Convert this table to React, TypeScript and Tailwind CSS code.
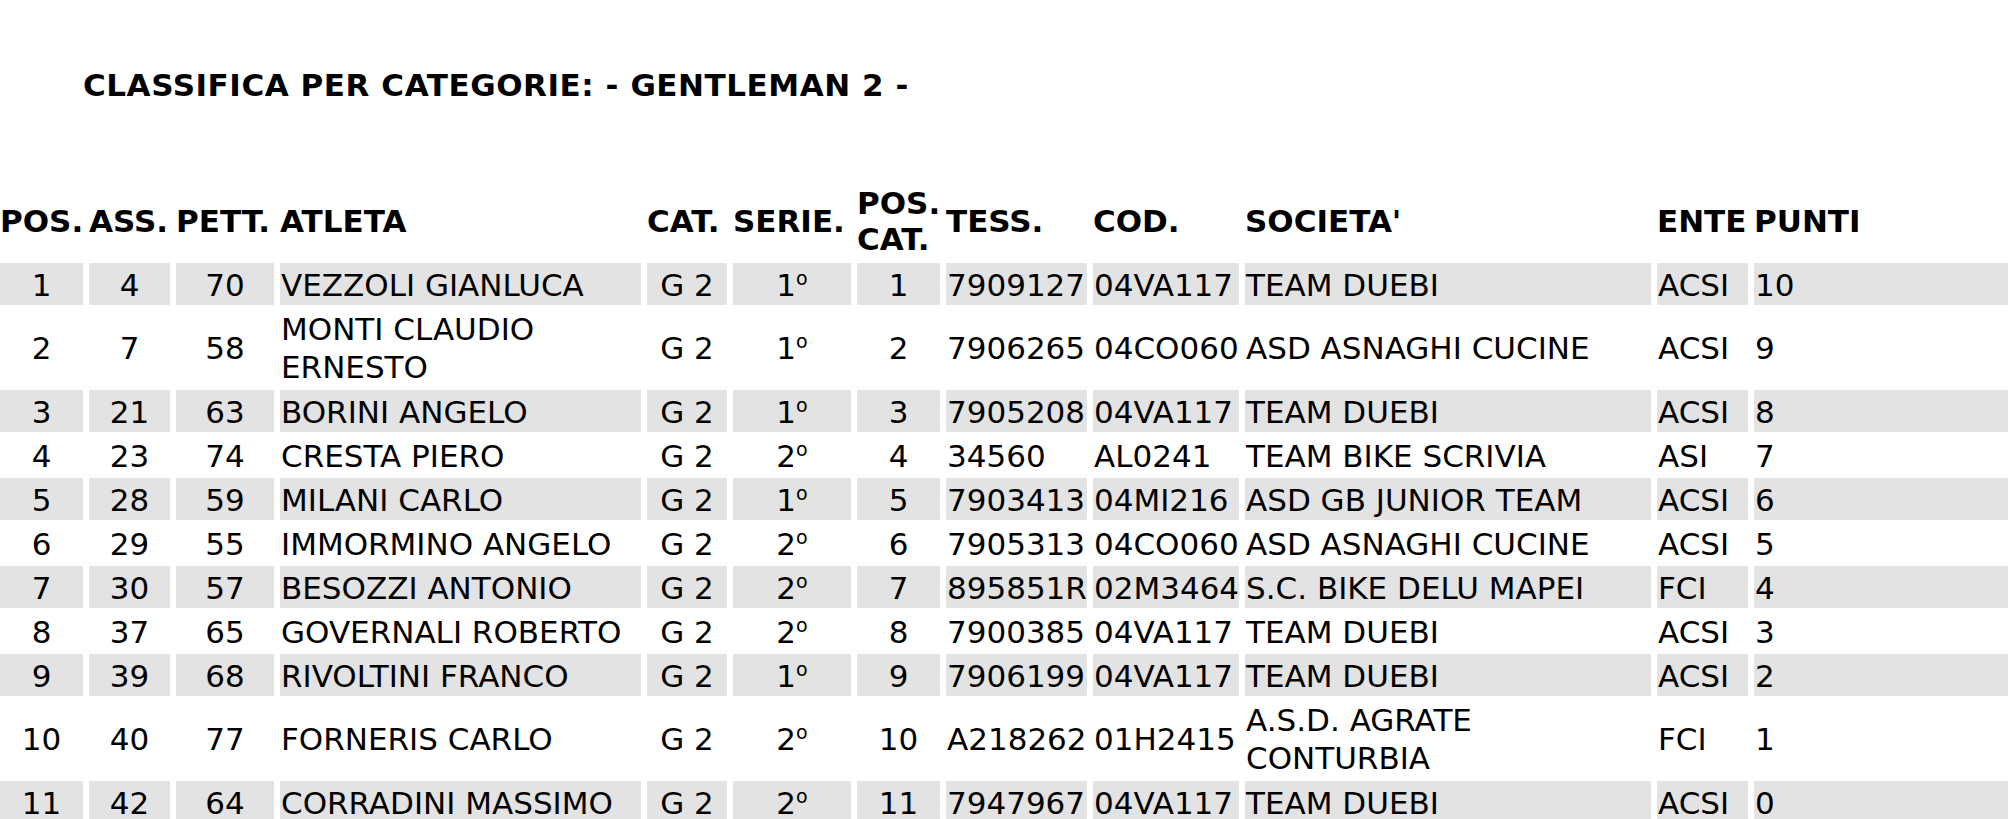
import React from "react";

type Row = {
  pos: string;
  ass: string;
  pett: string;
  atleta: string;
  cat: string;
  serie: string;
  posCat: string;
  tess: string;
  cod: string;
  societa: string;
  ente: string;
  punti: string;
  tall?: boolean;
};

const rows: Row[] = [
  { pos: "1", ass: "4", pett: "70", atleta: "VEZZOLI GIANLUCA", cat: "G 2", serie: "1º", posCat: "1", tess: "7909127", cod: "04VA117", societa: "TEAM DUEBI", ente: "ACSI", punti: "10" },
  { pos: "2", ass: "7", pett: "58", atleta: "MONTI CLAUDIO ERNESTO", cat: "G 2", serie: "1º", posCat: "2", tess: "7906265", cod: "04CO060", societa: "ASD ASNAGHI CUCINE", ente: "ACSI", punti: "9", tall: true },
  { pos: "3", ass: "21", pett: "63", atleta: "BORINI ANGELO", cat: "G 2", serie: "1º", posCat: "3", tess: "7905208", cod: "04VA117", societa: "TEAM DUEBI", ente: "ACSI", punti: "8" },
  { pos: "4", ass: "23", pett: "74", atleta: "CRESTA PIERO", cat: "G 2", serie: "2º", posCat: "4", tess: "34560", cod: "AL0241", societa: "TEAM BIKE SCRIVIA", ente: "ASI", punti: "7" },
  { pos: "5", ass: "28", pett: "59", atleta: "MILANI CARLO", cat: "G 2", serie: "1º", posCat: "5", tess: "7903413", cod: "04MI216", societa: "ASD GB JUNIOR TEAM", ente: "ACSI", punti: "6" },
  { pos: "6", ass: "29", pett: "55", atleta: "IMMORMINO ANGELO", cat: "G 2", serie: "2º", posCat: "6", tess: "7905313", cod: "04CO060", societa: "ASD ASNAGHI CUCINE", ente: "ACSI", punti: "5" },
  { pos: "7", ass: "30", pett: "57", atleta: "BESOZZI ANTONIO", cat: "G 2", serie: "2º", posCat: "7", tess: "895851R", cod: "02M3464", societa: "S.C. BIKE DELU MAPEI", ente: "FCI", punti: "4" },
  { pos: "8", ass: "37", pett: "65", atleta: "GOVERNALI ROBERTO", cat: "G 2", serie: "2º", posCat: "8", tess: "7900385", cod: "04VA117", societa: "TEAM DUEBI", ente: "ACSI", punti: "3" },
  { pos: "9", ass: "39", pett: "68", atleta: "RIVOLTINI FRANCO", cat: "G 2", serie: "1º", posCat: "9", tess: "7906199", cod: "04VA117", societa: "TEAM DUEBI", ente: "ACSI", punti: "2" },
  { pos: "10", ass: "40", pett: "77", atleta: "FORNERIS CARLO", cat: "G 2", serie: "2º", posCat: "10", tess: "A218262", cod: "01H2415", societa: "A.S.D. AGRATE CONTURBIA", ente: "FCI", punti: "1", tall: true },
  { pos: "11", ass: "42", pett: "64", atleta: "CORRADINI MASSIMO", cat: "G 2", serie: "2º", posCat: "11", tess: "7947967", cod: "04VA117", societa: "TEAM DUEBI", ente: "ACSI", punti: "0" },
];

const gridCols =
  "grid grid-cols-[83px_81px_98px_361px_80px_118px_83px_141px_146px_406px_91px_1fr] gap-x-[6px]";

function Cell({
  children,
  center,
  gray,
}: {
  children: React.ReactNode;
  center?: boolean;
  gray?: boolean;
}) {
  return (
    <div
      className={`flex items-center pt-[4px] leading-[37.5px] whitespace-normal ${
        center ? "justify-center text-center" : "pl-[1px]"
      } ${gray ? "bg-[#e3e3e3]" : ""}`}
    >
      <span className={center ? "whitespace-nowrap" : ""}>{children}</span>
    </div>
  );
}

function Ord({ v }: { v: string }) {
  const n = v.replace("º", "");
  return (
    <span className="whitespace-nowrap">
      {n}
      <span className="relative top-[-11px] text-[19px] leading-none">o</span>
    </span>
  );
}

export default function App() {
  return (
    <div
      className="h-[819px] w-[2008px] overflow-hidden bg-white text-black"
      style={{ fontFamily: "'DejaVu Sans', Verdana, sans-serif" }}
    >
      <div className="pl-[83px] pt-[66px] text-[31px] font-bold leading-[38px] tracking-[0.55px]">
        CLASSIFICA PER CATEGORIE: - GENTLEMAN 2 -
      </div>

      <div className="mt-[77px] flex flex-col gap-y-[6px] text-[31px]">
        <div className={`${gridCols} h-[76px] font-bold leading-[36px]`}>
          {[
            "POS.",
            "ASS.",
            "PETT.",
            "ATLETA",
            "CAT.",
            "SERIE.",
            "POS. CAT.",
            "TESS.",
            "COD.",
            "SOCIETA'",
            "ENTE",
            "PUNTI",
          ].map((h) => (
            <div key={h} className="flex items-center pt-[3px]">
              <span className={h === "POS. CAT." ? "block w-[70px]" : "whitespace-nowrap"}>{h}</span>
            </div>
          ))}
        </div>

        {rows.map((r, i) => {
          const gray = i % 2 === 0;
          return (
            <div
              key={r.pos}
              className={`${gridCols} ${r.tall ? "h-[77px]" : "h-[38px]"}`}
            >
              <Cell center gray={gray}>{r.pos}</Cell>
              <Cell center gray={gray}>{r.ass}</Cell>
              <Cell center gray={gray}>{r.pett}</Cell>
              <Cell gray={gray}>{r.atleta}</Cell>
              <Cell center gray={gray}>{r.cat}</Cell>
              <Cell center gray={gray}>
                <Ord v={r.serie} />
              </Cell>
              <Cell center gray={gray}>{r.posCat}</Cell>
              <Cell gray={gray}>{r.tess}</Cell>
              <Cell gray={gray}>{r.cod}</Cell>
              <Cell gray={gray}>{r.societa}</Cell>
              <Cell gray={gray}>{r.ente}</Cell>
              <Cell gray={gray}>{r.punti}</Cell>
            </div>
          );
        })}
      </div>
    </div>
  );
}
